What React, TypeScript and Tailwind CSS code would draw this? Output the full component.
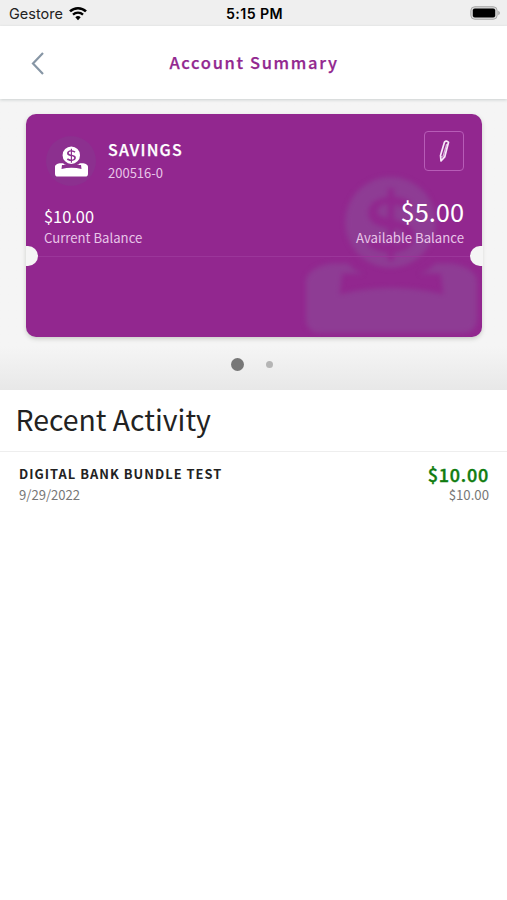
function WifiIcon() {
  return (
    <svg className="ml-[6px] h-[15px] w-[18px]" viewBox="0 0 18 15" fill="none" stroke="#000">
      <path d="M1 5.4a11.6 11.6 0 0 1 16 0" strokeWidth="2.6" />
      <path d="M4 8.700a7.300 7.300 0 0 1 10 0" strokeWidth="2.3" />
      <path d="M9 14.200 6.300 11.300a4 4 0 0 1 5.400 0Z" fill="#000" stroke="none" />
    </svg>
  );
}

function BatteryIcon() {
  return (
    <svg className="h-[14px] w-[30px]" viewBox="0 0 30 14" fill="none">
      <rect x="0.8" y="0.7" width="26.4" height="12.6" rx="4" fill="#d6d6d6" stroke="#aaa" />
      <rect x="2.8" y="2.5" width="22.4" height="9" rx="2" fill="#000" />
      <path d="M28.200 4.800Q30 5.500 30 7T28.200 9.200Z" fill="#aaa" />
    </svg>
  );
}

function SavingsIcon({ className }: { className: string }) {
  return (
    <svg className={className} viewBox="0 0 34 31" fill="currentColor">
      <path
        fillRule="evenodd"
        d="M16.800 0a9 9 0 1 1 0 18a9 9 0 1 1 0-18ZM16.300 2.300v1.700c-2.400.2-3.900 1.400-3.900 3.100 0 2 1.700 2.600 3.900 3.100v3.200c-1.300-.1-2.200-.6-3-1.300l-1.100 1.300c1.100 1 2.400 1.500 4.100 1.600v1.700h1.200v-1.700c2.500-.2 4-1.500 4-3.300 0-2-1.500-2.700-4-3.200v-3c1 .1 1.800.4 2.600 1l1-1.300c-1-.8-2.200-1.200-3.600-1.300v-1.600ZM16.300 5.300v2.900c-1.400-.3-2.100-.6-2.100-1.400 0-.8.8-1.400 2.100-1.500ZM17.500 10.200c1.500.4 2.200.8 2.200 1.700s-.8 1.500-2.200 1.600Z"
      />
      <path d="M0 20.800C0 18.700 3 17.200 6 17.200H8.400Q9.500 18.800 11.500 19.200H7.200L6.700 23.300Q17 20.700 27.300 23.300L26.800 19.200H22.500Q24.500 18.800 25.600 17.200H28C31 17.200 34 18.700 34 20.800V28Q34 31 31 31H3Q0 31 0 28Z" />
    </svg>
  );
}

function PencilIcon() {
  return (
    <svg className="h-6 w-[14px]" viewBox="0 0 14 24" fill="none" stroke="#f8e8fa" strokeLinejoin="round">
      <path d="M3.500 16.500 7.500 3q1.900-2 4 .3L7.700 18 4 22Z" strokeWidth="1.700" />
      <path d="M9.700 5 6 17.500M3.700 17.500l3.500 1M4 21.500l1.300-2" strokeWidth="1.200" strokeOpacity=".7" />
    </svg>
  );
}

export default function App() {
  return (
    <div className="h-[900px] w-[507px] overflow-hidden bg-white font-['Noto_Sans_CJK_JP','Noto_Sans',sans-serif] text-[#222]">
      <div className="grid h-[26px] grid-cols-3 grid-rows-[26px] items-center bg-[#efefef] pr-[7px] pl-[9px] font-['Inter',sans-serif] leading-[26px] text-black">
        <div className="flex items-center">
          <span className="pt-px text-[14.500px] text-[#222]">Gestore</span>
          <WifiIcon />
        </div>
        <div className="pt-px text-center text-[14.200px] font-semibold tracking-[0.400px]">5:15 PM</div>
        <div className="flex justify-end">
          <BatteryIcon />
        </div>
      </div>

      <header className="relative z-10 flex h-[73px] items-center bg-white px-[30px] shadow-[0_1px_3px_rgba(80,100,100,0.25)]">
        <svg className="h-6 w-4" viewBox="0 0 16 24" fill="none" stroke="#8796a5" strokeWidth="2.200">
          <path d="M13 2 3 12.500 13 23" />
        </svg>
        <h1 className="flex-1 pr-[15px] pb-[2px] text-center text-[16.500px] leading-6 font-medium tracking-[1.660px] text-[#92278f] [-webkit-text-stroke:0.250px_#92278f]">
          Account Summary
        </h1>
      </header>

      <section className="h-[291px] bg-linear-to-b from-[#f5f5f5] from-85% to-[#e8e8e8] px-[26px] pt-[15px]">
        <div className="relative h-[223px] w-[456px] rounded-[10px] bg-[#92278f] shadow-[0_2px_4px_rgba(80,90,70,0.25)]">
          <SavingsIcon className="absolute top-[63px] left-[279px] h-[156px] w-[173px] text-[#8e3c94] blur-[2.500px]" />
          <div className="relative flex h-[143px] flex-col justify-between border-b border-[#9b369a]">
            <div className="flex items-start pt-[17px] pr-[18px] pl-[20px]">
              <div className="mt-[5px] flex size-[50px] items-center justify-center rounded-full bg-[#8c308f]">
                <SavingsIcon className="h-[31px] w-[33px] text-white" />
              </div>
              <div className="ml-[12px] flex-1 pt-[6px]">
                <div className="text-[16px] leading-[24px] font-medium tracking-[1.200px] text-white [-webkit-text-stroke:0.250px_white]">SAVINGS</div>
                <div className="text-[13px] leading-[23px] text-[#e8c5e8]">200516-0</div>
              </div>
              <button className="flex size-10 items-center justify-center rounded-[4px] border border-[#b75cb7]">
                <PencilIcon />
              </button>
            </div>
            <div className="flex items-end justify-between px-[18px] pb-[8px]">
              <div>
                <div className="text-[16.400px] leading-[24px] text-white">$10.00</div>
                <div className="text-[13.150px] leading-[20px] text-[#e8c5e8]">Current Balance</div>
              </div>
              <div className="text-right">
                <div className="text-[25.400px] leading-[34px] text-white">$5.00</div>
                <div className="text-[13.200px] leading-[20px] text-[#e8c5e8]">Available Balance</div>
              </div>
            </div>
          </div>
          <span className="absolute top-[132px] left-0 h-[20px] w-[12px] rounded-r-full bg-[#f5f5f5]" />
          <span className="absolute top-[132px] -right-px h-[20px] w-[13px] rounded-l-full bg-[#f5f5f5]" />
        </div>
        <div className="flex h-[54px] items-center justify-center gap-[22px] pr-[3px]">
          <span className="size-[13px] rounded-full bg-[#777]" />
          <span className="size-[7px] rounded-full bg-[#b5b5b5]" />
        </div>
      </section>

      <h2 className="h-[62px] border-b border-[#eee] pl-[15.500px] text-[28.400px] leading-[57px]">Recent Activity</h2>

      <div className="flex justify-between pt-[11px] pr-[18px] pl-[19px]">
        <div>
          <div className="text-[12.900px] leading-[22px] font-bold tracking-[1.020px]">DIGITAL BANK BUNDLE TEST</div>
          <div className="text-[13.100px] leading-[20px] text-[#777]">9/29/2022</div>
        </div>
        <div className="text-right">
          <div className="text-[18px] leading-[23px] font-medium tracking-[0.750px] text-[#107c10] [-webkit-text-stroke:0.400px_#107c10]">$10.00</div>
          <div className="text-[13.200px] leading-[18px] text-[#777]">$10.00</div>
        </div>
      </div>
    </div>
  );
}
